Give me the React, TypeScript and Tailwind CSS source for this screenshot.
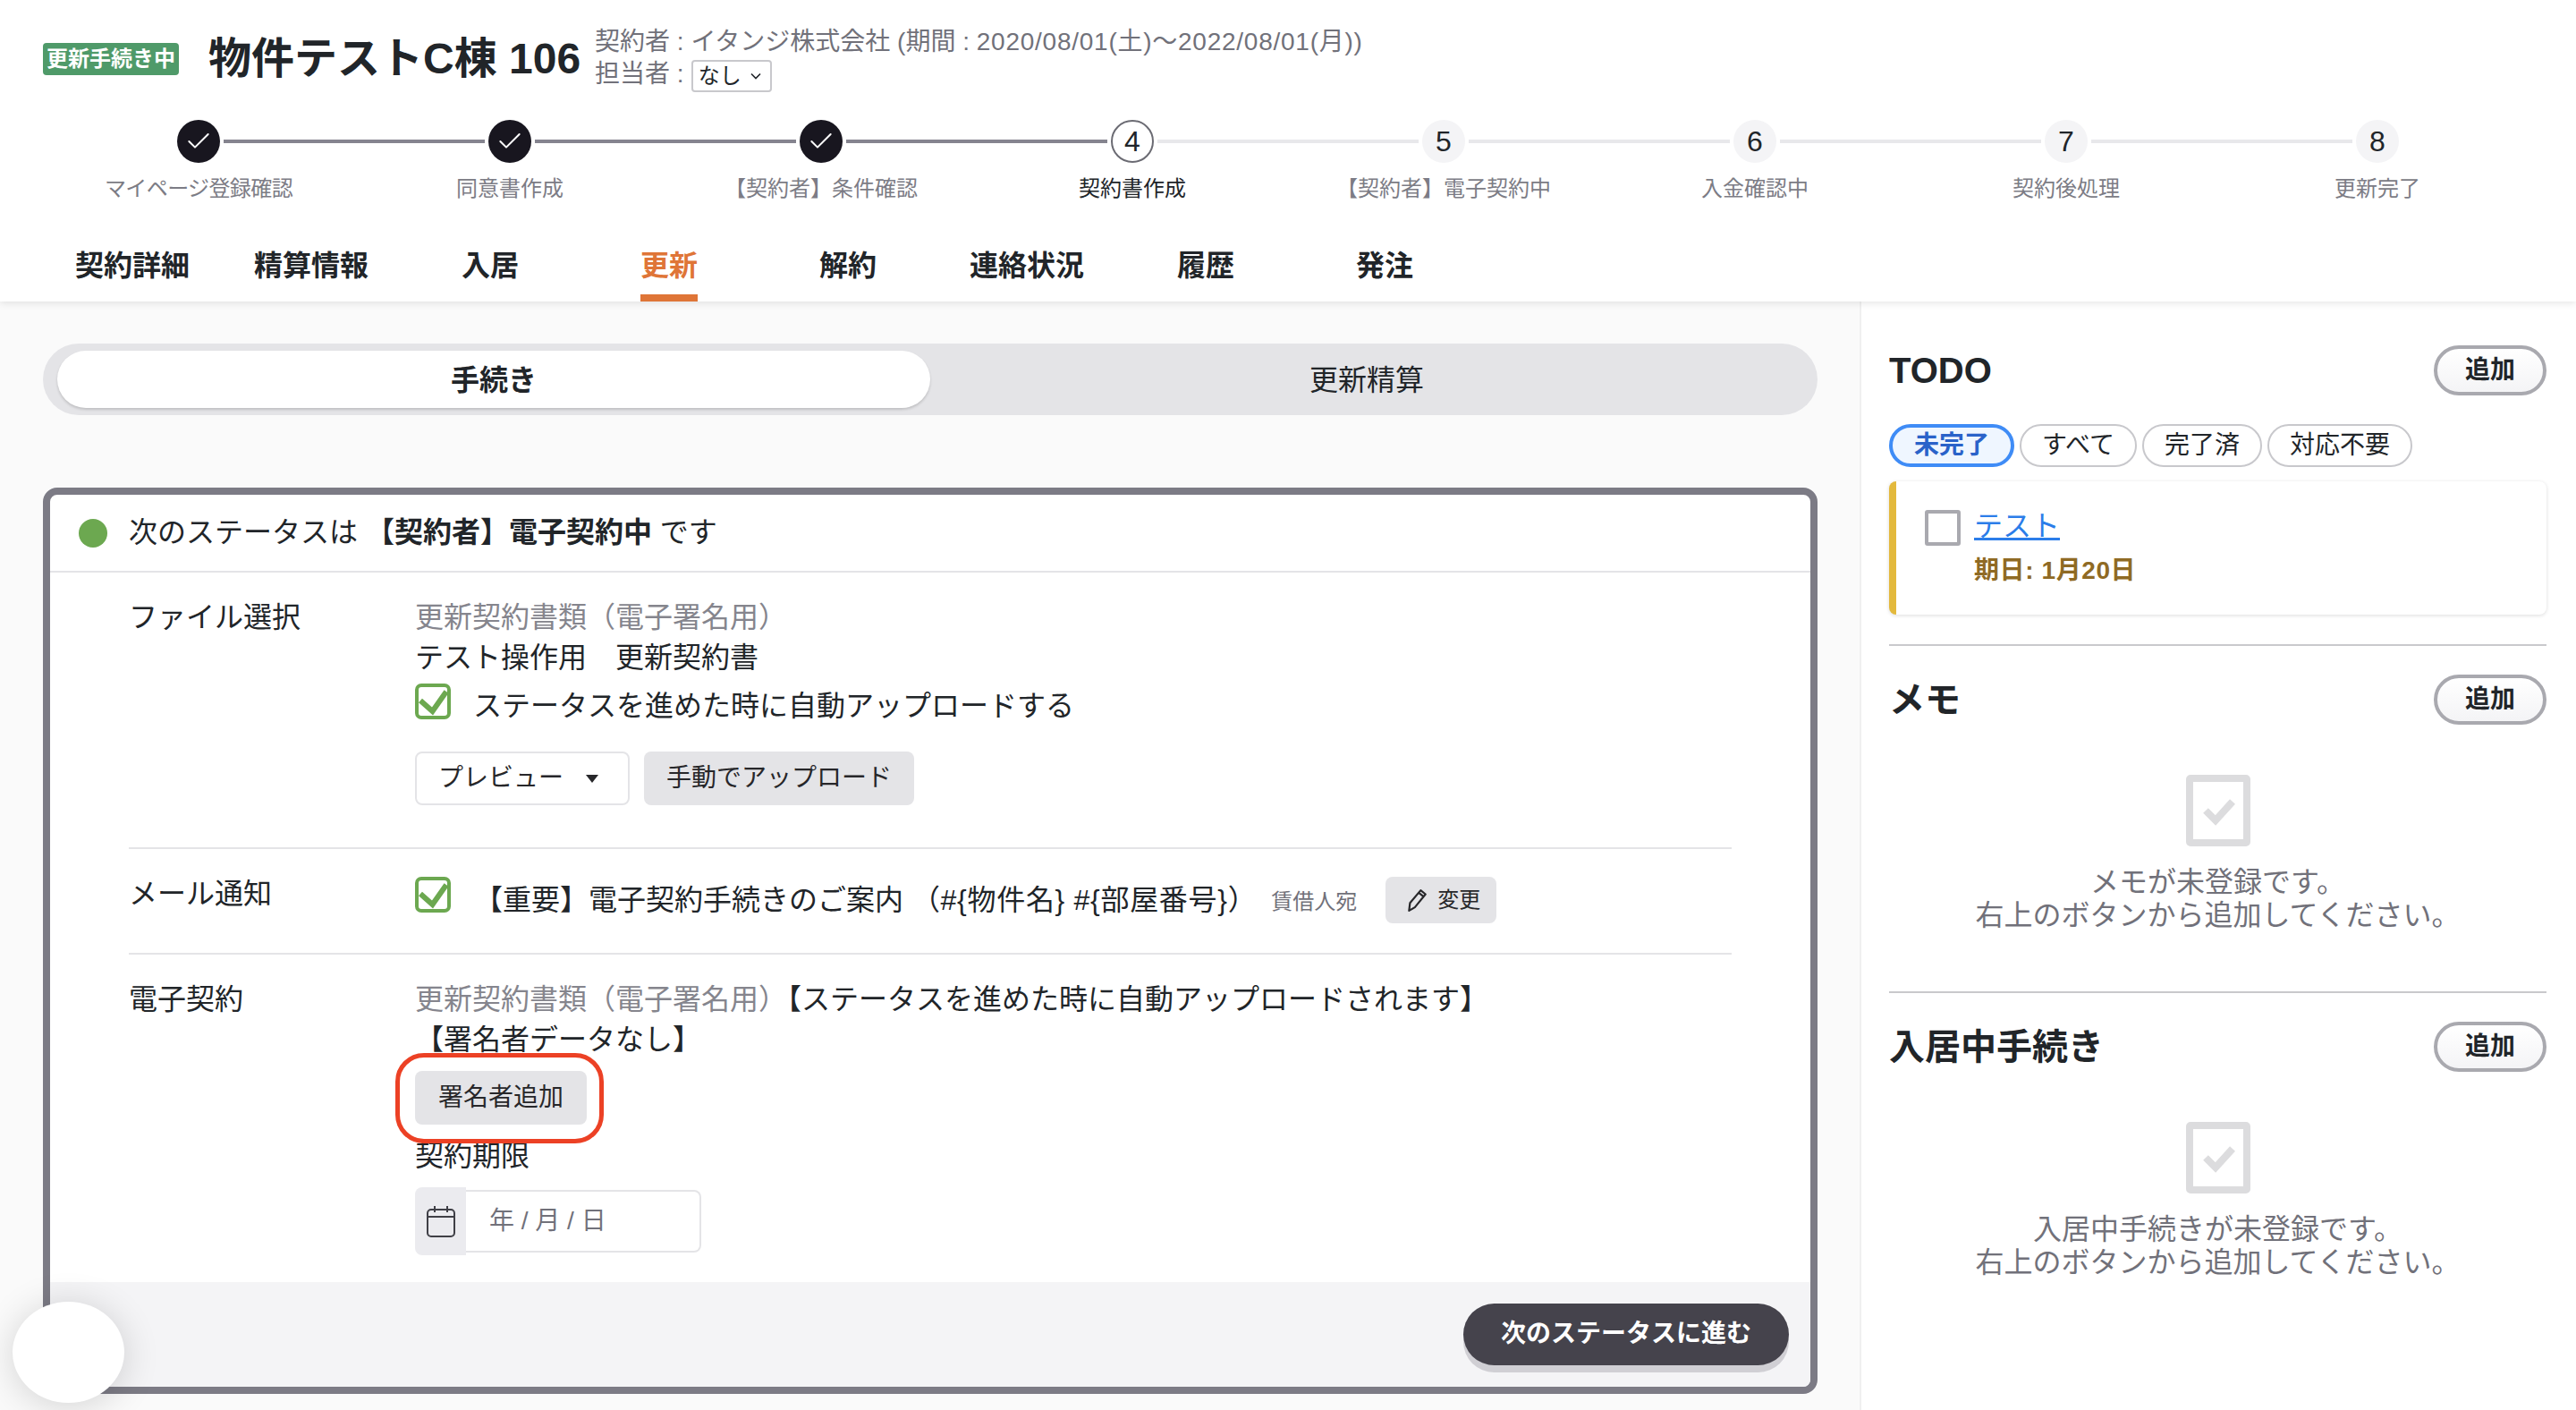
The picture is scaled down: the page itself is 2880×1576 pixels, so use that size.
import { Check } from "lucide-react";

const steps = [
  "マイページ登録確認",
  "同意書作成",
  "【契約者】条件確認",
  "契約書作成",
  "【契約者】電子契約中",
  "入金確認中",
  "契約後処理",
  "更新完了",
];

const tabs = ["契約詳細", "精算情報", "入居", "更新", "解約", "連絡状況", "履歴", "発注"];

function Step({ index, label }: { index: number; label: string }) {
  const current = index === 3;
  const done = index < 3;
  const leftLine = index === 0 ? "bg-transparent" : index <= 3 ? "bg-[#85848f]" : "bg-[#e8e8eb]";
  const rightLine = index === 7 ? "bg-transparent" : index < 3 ? "bg-[#85848f]" : "bg-[#e8e8eb]";
  return (
    <div className="flex flex-col items-center">
      <div className="flex w-full items-center gap-1">
        <div className={`h-1 flex-1 ${leftLine}`} />
        {done ? (
          <div className="flex h-12 w-12 items-center justify-center rounded-full bg-[#18161f]">
            <Check className="h-8 w-8 text-white" strokeWidth={1.5} />
          </div>
        ) : (
          <div
            className={`flex h-12 w-12 items-center justify-center rounded-full text-[32px] text-[#212529] ${
              current ? "border-2 border-[#6b6b73] bg-white" : "bg-[#f4f4f6]"
            }`}
          >
            {index + 1}
          </div>
        )}
        <div className={`h-1 flex-1 ${rightLine}`} />
      </div>
      <div
        className={`mt-[11px] text-[24px] leading-[36px] ${current ? "text-[#212529]" : "text-[#7c7c85]"} ${
          index === 0 ? "tracking-[-0.6px]" : ""
        }`}
      >
        {label}
      </div>
    </div>
  );
}

function GreenCheck() {
  return (
    <svg viewBox="0 0 40 40" className="h-10 w-10 shrink-0">
      <rect x="2" y="2" width="36" height="36" rx="5" fill="#fff" stroke="#6ca850" strokeWidth="4" />
      <path d="M6 19 L19.5 31 L35 9" fill="none" stroke="#6ca850" strokeWidth="6" />
    </svg>
  );
}

function GrayButton({ children, className = "" }: { children: React.ReactNode; className?: string }) {
  return (
    <div className={`flex h-[60px] items-center rounded-lg bg-[#e4e4e7] px-[26px] text-[28px] text-[#27272a] ${className}`}>
      {children}
    </div>
  );
}

function AddButton() {
  return (
    <div className="flex h-14 w-[126px] items-center justify-center rounded-full border-4 border-[#a9a9af] bg-gradient-to-b from-white to-[#f4f4f6] text-[28px] font-bold text-[#212529]">
      追加
    </div>
  );
}

function SectionHead({ title }: { title: string }) {
  return (
    <div className="flex h-14 items-center justify-between">
      <div className="text-[40px] font-bold text-[#212529]">{title}</div>
      <AddButton />
    </div>
  );
}

function EmptyState({ first }: { first: string }) {
  return (
    <div className="mt-14 flex flex-col items-center">
      <svg viewBox="0 0 72 80" className="h-20 w-[72px]">
        <rect x="4" y="4" width="64" height="72" rx="1" fill="#fff" stroke="#dcdcde" strokeWidth="8" />
        <path d="M22 40 L33 51 L52 30" fill="none" stroke="#dcdcde" strokeWidth="8" />
      </svg>
      <div className="mt-[22px] text-center text-[32px] leading-[37px] text-[#71717a]">
        <div>{first}</div>
        <div>右上のボタンから追加してください。</div>
      </div>
    </div>
  );
}

export default function App() {
  return (
    <div className="relative h-[1576px] w-[2880px] overflow-hidden bg-white font-['Liberation_Sans','Noto_Sans_CJK_JP',sans-serif] text-[#212529]">
      {/* Header */}
      <header className="relative z-10 h-[337px] bg-white shadow-[0_2px_8px_rgba(0,0,0,0.1)]">
        <div className="flex h-[134px] items-start pl-12">
          <div className="mt-12 flex h-9 w-[152px] items-center justify-center rounded bg-[#4f9a69] text-[24px] font-bold whitespace-nowrap text-white">
            更新手続き中
          </div>
          <h1 className="mt-[38px] ml-[33px] text-[48px] leading-[56px] font-bold whitespace-nowrap">物件テストC棟 106</h1>
          <div className="mt-[29px] ml-4 text-[28px] leading-9 text-[#71717a]">
            <div className="whitespace-nowrap">
              契約者 : イタンジ株式会社 (期間 : <span className="tracking-[0.75px]">2020/08/01(土)〜2022/08/01(月))</span>
            </div>
            <div className="flex items-start">
              <span>担当者 :</span>
              <div className="mt-[2px] ml-[8px] flex h-9 w-[90px] items-center justify-between rounded border-2 border-[#c8c8cc] pr-[10px] pl-[6px] text-[24px] leading-none text-[#212529]">
                なし
                <svg viewBox="0 0 12 8" className="h-[8px] w-3">
                  <path d="M1 1.5 L6 6.5 L11 1.5" fill="none" stroke="#212529" strokeWidth="1.6" />
                </svg>
              </div>
            </div>
          </div>
        </div>

        {/* Stepper */}
        <div className="mx-12 grid grid-cols-8">
          {steps.map((s, i) => (
            <Step key={s} index={i} label={s} />
          ))}
        </div>

        {/* Tabs */}
        <nav className="mt-7 flex pl-12">
          {tabs.map((t) => (
            <div key={t} className="flex h-20 w-[200px] flex-col items-center">
              <div className={`flex flex-1 items-center pt-2 text-[32px] font-bold ${t === "更新" ? "text-[#df7537]" : "text-[#212529]"}`}>
                {t}
              </div>
              <div className={`h-2 w-16 ${t === "更新" ? "bg-[#df7537]" : "bg-transparent"}`} />
            </div>
          ))}
        </nav>
      </header>

      <div className="flex h-[1239px]">
        {/* Main */}
        <main className="w-[2079px] bg-[#fafafa] pt-[47px] pr-[47px] pl-12">
          <div className="flex h-20 rounded-full bg-[#e4e4e7] px-4 py-2 text-[32px]">
            <div className="flex flex-1 items-center justify-center rounded-full bg-white pt-[2px] font-bold shadow-[0_2px_3px_rgba(0,0,0,0.16)]">
              手続き
            </div>
            <div className="flex flex-1 items-center justify-center pt-[2px]">更新精算</div>
          </div>

          <section className="mt-[81px] flex h-[1013px] flex-col overflow-hidden rounded-2xl border-8 border-[#7c7b85] bg-white text-[32px]">
            <div className="flex h-[87px] shrink-0 items-center gap-6 border-b-2 border-[#e4e4e7] pl-8">
              <div className="h-8 w-8 rounded-full bg-[#6ca850]" />
              <div className="pb-[2px] whitespace-nowrap">
                次のステータスは <b className="font-bold">【契約者】電子契約中</b> です
              </div>
            </div>

            <div className="mx-[88px]">
              {/* File */}
              <div className="flex border-b-2 border-[#e4e4e7] pt-7 pb-[47px]">
                <div className="w-[320px] shrink-0 leading-[45px]">ファイル選択</div>
                <div>
                  <div className="leading-[45px] text-[#85858d]">更新契約書類（電子署名用）</div>
                  <div className="leading-[45px]">テスト操作用　更新契約書</div>
                  <div className="mt-[6px] flex h-10 gap-[25px]">
                    <GreenCheck />
                    <span className="leading-[50px]">ステータスを進めた時に自動アップロードする</span>
                  </div>
                  <div className="mt-9 flex gap-4">
                    <div className="flex h-[60px] w-[240px] items-center rounded-lg border-2 border-[#e4e4e7] bg-white pl-6 text-[28px] text-[#27272a]">
                      プレビュー
                      <svg viewBox="0 0 14 9" className="ml-[25px] h-[9px] w-[14px]">
                        <path d="M0 0 H14 L7 9 Z" fill="#27272a" />
                      </svg>
                    </div>
                    <GrayButton className="!px-[25px]">手動でアップロード</GrayButton>
                  </div>
                </div>
              </div>

              {/* Mail */}
              <div className="flex border-b-2 border-[#e4e4e7] pt-[25px] pb-[29px]">
                <div className="mt-[3px] w-[320px] shrink-0 leading-[45px]">メール通知</div>
                <div className="mt-[6px] flex items-start">
                  <GreenCheck />
                  <span className="ml-[26px] leading-[52px] whitespace-nowrap">
                    【重要】電子契約手続きのご案内 <span className="tracking-[0.7px]">（#&#123;物件名&#125; #&#123;部屋番号&#125;）</span>
                  </span>
                  <span className="ml-4 text-[24px] leading-[56px] whitespace-nowrap text-[#71717a]">賃借人宛</span>
                  <div className="ml-8 flex h-[52px] w-[124px] items-center justify-center gap-[10px] rounded-lg bg-[#e4e4e7] pl-1 text-[24px] text-[#27272a]">
                    <svg viewBox="0 0 24 24" className="h-[26px] w-[26px]" fill="none" stroke="#27272a" strokeWidth="2" strokeLinejoin="round">
                      <path d="M4 23 L5 15 L16 2 L21 6 L10 19.5 Z M14 4.5 L19 8.5" />
                    </svg>
                    変更
                  </div>
                </div>
              </div>

              {/* E-contract */}
              <div className="flex pt-7">
                <div className="w-[320px] shrink-0 leading-[45px]">電子契約</div>
                <div>
                  <div className="leading-[45px] whitespace-nowrap">
                    <span className="text-[#85858d]">更新契約書類（電子署名用）</span>【ステータスを進めた時に自動アップロードされます】
                  </div>
                  <div className="leading-[45px]">【署名者データなし】</div>
                  <div className="relative mt-3 w-fit">
                    <GrayButton>署名者追加</GrayButton>
                    <div className="absolute -top-5 -right-[19px] -bottom-[21px] -left-[22px] rounded-[32px] border-[5px] border-[#ec4125]" />
                  </div>
                  <div className="mt-[13px] leading-[45px]">契約期限</div>
                  <div className="mt-3 flex items-center">
                    <div className="flex h-[76px] w-[57px] items-center justify-center rounded-l-lg bg-[#ebebef]">
                      <svg viewBox="0 0 32 36" className="h-9 w-8" fill="none" stroke="#3f3f46" strokeWidth="2">
                        <rect x="1" y="5" width="30" height="30" rx="4" />
                        <path d="M1 13 H31 M9 1 V8 M23 1 V8" />
                      </svg>
                    </div>
                    <div className="flex h-[70px] w-[263px] items-center rounded-r-lg border-2 border-l-0 border-[#e4e4e7] pl-[26px] text-[28px] text-[#71717a]">
                      年 / 月 / 日
                    </div>
                  </div>
                </div>
              </div>
            </div>

            <div className="mt-[30px] flex flex-1 justify-end bg-[#f4f4f6] pt-6 pr-6">
              <div className="flex h-[69px] w-[364px] items-center justify-center rounded-full bg-[#45434c] pb-[2px] text-[28px] font-bold text-white shadow-[0_8px_0_#d0cfd4]">
                次のステータスに進む
              </div>
            </div>
          </section>
        </main>

        {/* Sidebar */}
        <aside className="w-[801px] border-l-2 border-[#f0f0f0] bg-white pt-[49px] pr-[33px] pl-[31px]">
          <SectionHead title="TODO" />
          <div className="mt-8 flex gap-[6px] text-[28px]">
            <div className="flex h-12 items-center rounded-full border-4 border-[#3f8cf6] bg-[#eff6ff] px-6 font-bold text-[#2a62c9]">未完了</div>
            <div className="flex h-12 items-center rounded-full border-2 border-[#c8c8cc] px-[23px]">すべて</div>
            <div className="flex h-12 items-center rounded-full border-2 border-[#c8c8cc] px-[23px]">完了済</div>
            <div className="flex h-12 items-center rounded-full border-2 border-[#c8c8cc] px-[23px]">対応不要</div>
          </div>
          <div className="mt-4 flex h-[149px] rounded-lg border-l-8 border-[#e3b93c] bg-white pt-8 pl-8 shadow-[0_1px_4px_rgba(0,0,0,0.14)]">
            <div className="h-10 w-10 rounded-[3px] border-4 border-[#a9a9af]" />
            <div className="-mt-[2px] ml-[15px]">
              <div className="text-[32px] leading-[40px] text-[#2b7de9] underline">テスト</div>
              <div className="mt-[10px] text-[28px] leading-[40px] font-bold tracking-[0.6px] text-[#8f6a24]">期日: 1月20日</div>
            </div>
          </div>

          <div className="mt-[33px] border-t-2 border-[#c9c9cc] pt-8">
            <SectionHead title="メモ" />
            <EmptyState first="メモが未登録です。" />
          </div>

          <div className="mt-[66px] border-t-2 border-[#c9c9cc] pt-8">
            <SectionHead title="入居中手続き" />
            <EmptyState first="入居中手続きが未登録です。" />
          </div>
        </aside>
      </div>

      {/* Floating launcher */}
      <div className="absolute top-[1455px] left-[14px] z-20 h-[113px] w-[125px] rounded-[50%] bg-white shadow-[0_4px_40px_rgba(0,0,0,0.16)]" />
    </div>
  );
}
